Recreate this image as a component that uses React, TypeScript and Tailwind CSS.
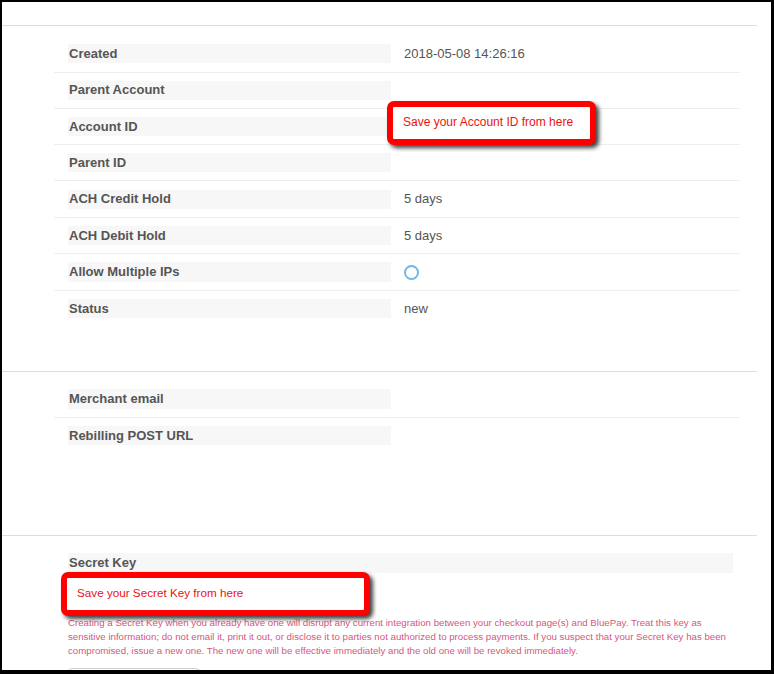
import React from "react";

const font = { fontFamily: '"Liberation Sans", Arial, sans-serif' };

type Row = { label: string; value?: React.ReactNode };

function Table({ rows }: { rows: Row[] }) {
  return (
    <div className="ml-[52px] w-[686px]">
      {rows.map((r, i) => (
        <div
          key={r.label}
          className={`flex items-center px-[14px] py-[8px] ${i > 0 ? "border-t border-[#eeeeee]" : ""}`}
        >
          <div className="w-[323px] h-[19.33px] bg-[#f7f7f7] flex items-center pl-[1px] text-[13px] font-bold text-[#555555]">
            {r.label}
          </div>
          <div className="pl-[13px] text-[13px] text-[#555555] flex items-center">{r.value}</div>
        </div>
      ))}
    </div>
  );
}

function Callout({ text, className }: { text: string; className: string }) {
  return (
    <div
      className={`absolute h-[44px] border-[6px] border-[#ff0000] rounded-[7px] bg-white shadow-[3px_3px_4px_rgba(0,0,0,0.75)] pl-[10px] pt-[6px] text-[#ee1111] ${className}`}
    >
      {text}
    </div>
  );
}

export default function App() {
  return (
    <div
      className="relative w-[774px] h-[674px] overflow-hidden bg-white border-t-2 border-l-2 border-r-[3px] border-b-4 border-black"
      style={font}
    >
      <div className="w-[755px]">
        <div className="h-[23px]" />
        <div className="border-t border-[#dddddd] pt-[10px] pb-[45px]">
          <Table
            rows={[
              { label: "Created", value: "2018-05-08 14:26:16" },
              { label: "Parent Account" },
              { label: "Account ID" },
              { label: "Parent ID" },
              { label: "ACH Credit Hold", value: "5 days" },
              { label: "ACH Debit Hold", value: "5 days" },
              {
                label: "Allow Multiple IPs",
                value: (
                  <span className="inline-block w-[15px] h-[15px] rounded-full border-2 border-[#6cb8e6] bg-white" />
                ),
              },
              { label: "Status", value: "new" },
            ]}
          />
        </div>
        <div className="border-t border-[#dddddd] pt-[9px] pb-[82px]">
          <Table
            rows={[{ label: "Merchant email" }, { label: "Rebilling POST URL" }]}
          />
        </div>
        <div className="border-t border-[#dddddd] pt-[17px] pl-[66px]">
          <div className="w-[665px] h-[20px] bg-[#f7f7f7] flex items-center pl-[1px] text-[13px] font-bold text-[#555555]">
            Secret Key
          </div>
          <div className="h-[43px]" />
          <p className="w-[665px] text-[9.7px] leading-[14px] text-[#d6577e]">
            Creating a Secret Key when you already have one will disrupt any current integration between your
            checkout page(s) and BluePay. Treat this key as sensitive information; do not email it, print it out, or
            disclose it to parties not authorized to process payments. If you suspect that your Secret Key has been
            compromised, issue a new one. The new one will be effective immediately and the old one will be revoked
            immediately.
          </p>
          <div className="mt-[10px] w-[132px] h-[30px] border border-[#cccccc] rounded-[4px] bg-white" />
        </div>
      </div>
      <Callout text="Save your Account ID from here" className="left-[385px] top-[99px] w-[209px] text-[12px]" />
      <Callout text="Save your Secret Key from here" className="left-[59px] top-[570px] w-[309px] text-[11.7px]" />
    </div>
  );
}
